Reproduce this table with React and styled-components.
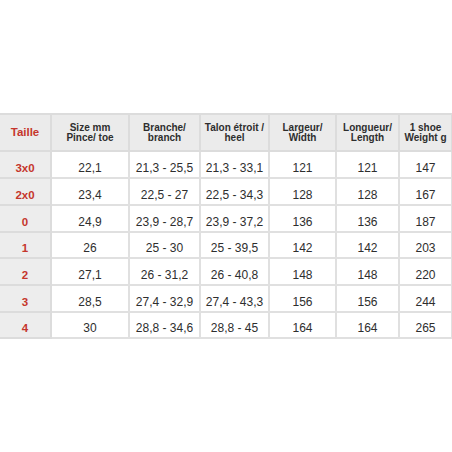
import React from "react";
import styled, { createGlobalStyle } from "styled-components";

const Global = createGlobalStyle`
  html, body { margin: 0; padding: 0; background: #ffffff; }
  body { font-family: "Liberation Sans", Arial, Helvetica, sans-serif; }
`;

const Page = styled.div`
  width: 452px;
  height: 452px;
  padding-top: 113px;
  box-sizing: border-box;
  background: #ffffff;
`;

const Table = styled.table`
  width: 452px;
  border-collapse: collapse;
  table-layout: fixed;
`;

const Row = styled.tr`
  height: ${(p) => p.$h}px;
`;

const HeadCell = styled.th`
  box-sizing: border-box;
  padding: 0;
  background: #ebebeb;
  border: 2px solid #dcdcdc;
  border-left: ${(p) => (p.$first ? "none" : "2px solid #dcdcdc")};
  color: ${(p) => (p.$red ? "#c5362c" : "#2e2e2e")};
  font-size: ${(p) => (p.$red ? "11.5px" : "10px")};
  line-height: 9.5px;
  font-weight: bold;
  text-align: center;
  vertical-align: middle;
`;

const RowHead = styled.th`
  box-sizing: border-box;
  padding: 0 0 2px 0;
  background: #ededed;
  border: 2px solid #dcdcdc;
  border-left: none;
  color: #c5362c;
  font-size: 11.5px;
  line-height: 14px;
  font-weight: bold;
  text-align: center;
  vertical-align: bottom;
`;

const Cell = styled.td`
  box-sizing: border-box;
  padding: 0 0 2px 0;
  background: #ffffff;
  border: 2px solid #e0e0e0;
  color: #2e2e2e;
  font-size: 12px;
  line-height: 14px;
  text-align: center;
  vertical-align: bottom;
  white-space: nowrap;
`;

const widths = [51, 78, 71, 69, 67, 63, 53];

const headers = [
  ["Size mm", "Pince/ toe"],
  ["Branche/", "branch"],
  ["Talon étroit /", "heel"],
  ["Largeur/", "Width"],
  ["Longueur/", "Length"],
  ["1 shoe", "Weight g"],
];

const rows = [
  ["3x0", "22,1", "21,3 - 25,5", "21,3 - 33,1", "121", "121", "147", 27],
  ["2x0", "23,4", "22,5 - 27", "22,5 - 34,3", "128", "128", "167", 27],
  ["0", "24,9", "23,9 - 28,7", "23,9 - 37,2", "136", "136", "187", 27],
  ["1", "26", "25 - 30", "25 - 39,5", "142", "142", "203", 26],
  ["2", "27,1", "26 - 31,2", "26 - 40,8", "148", "148", "220", 27],
  ["3", "28,5", "27,4 - 32,9", "27,4 - 43,3", "156", "156", "244", 27],
  ["4", "30", "28,8 - 34,6", "28,8 - 45", "164", "164", "265", 26],
];

export default function App() {
  return (
    <Page>
      <Global />
      <Table>
        <colgroup>
          {widths.map((w, i) => (
            <col key={i} style={{ width: w }} />
          ))}
        </colgroup>
        <thead>
          <Row $h={37}>
            <HeadCell $first $red>Taille</HeadCell>
            {headers.map(([a, b], i) => (
              <HeadCell key={i}>
                {a}
                <br />
                {b}
              </HeadCell>
            ))}
          </Row>
        </thead>
        <tbody>
          {rows.map((r) => (
            <Row key={r[0]} $h={r[7]}>
              <RowHead>{r[0]}</RowHead>
              {r.slice(1, 7).map((v, i) => (
                <Cell key={i}>{v}</Cell>
              ))}
            </Row>
          ))}
        </tbody>
      </Table>
    </Page>
  );
}
